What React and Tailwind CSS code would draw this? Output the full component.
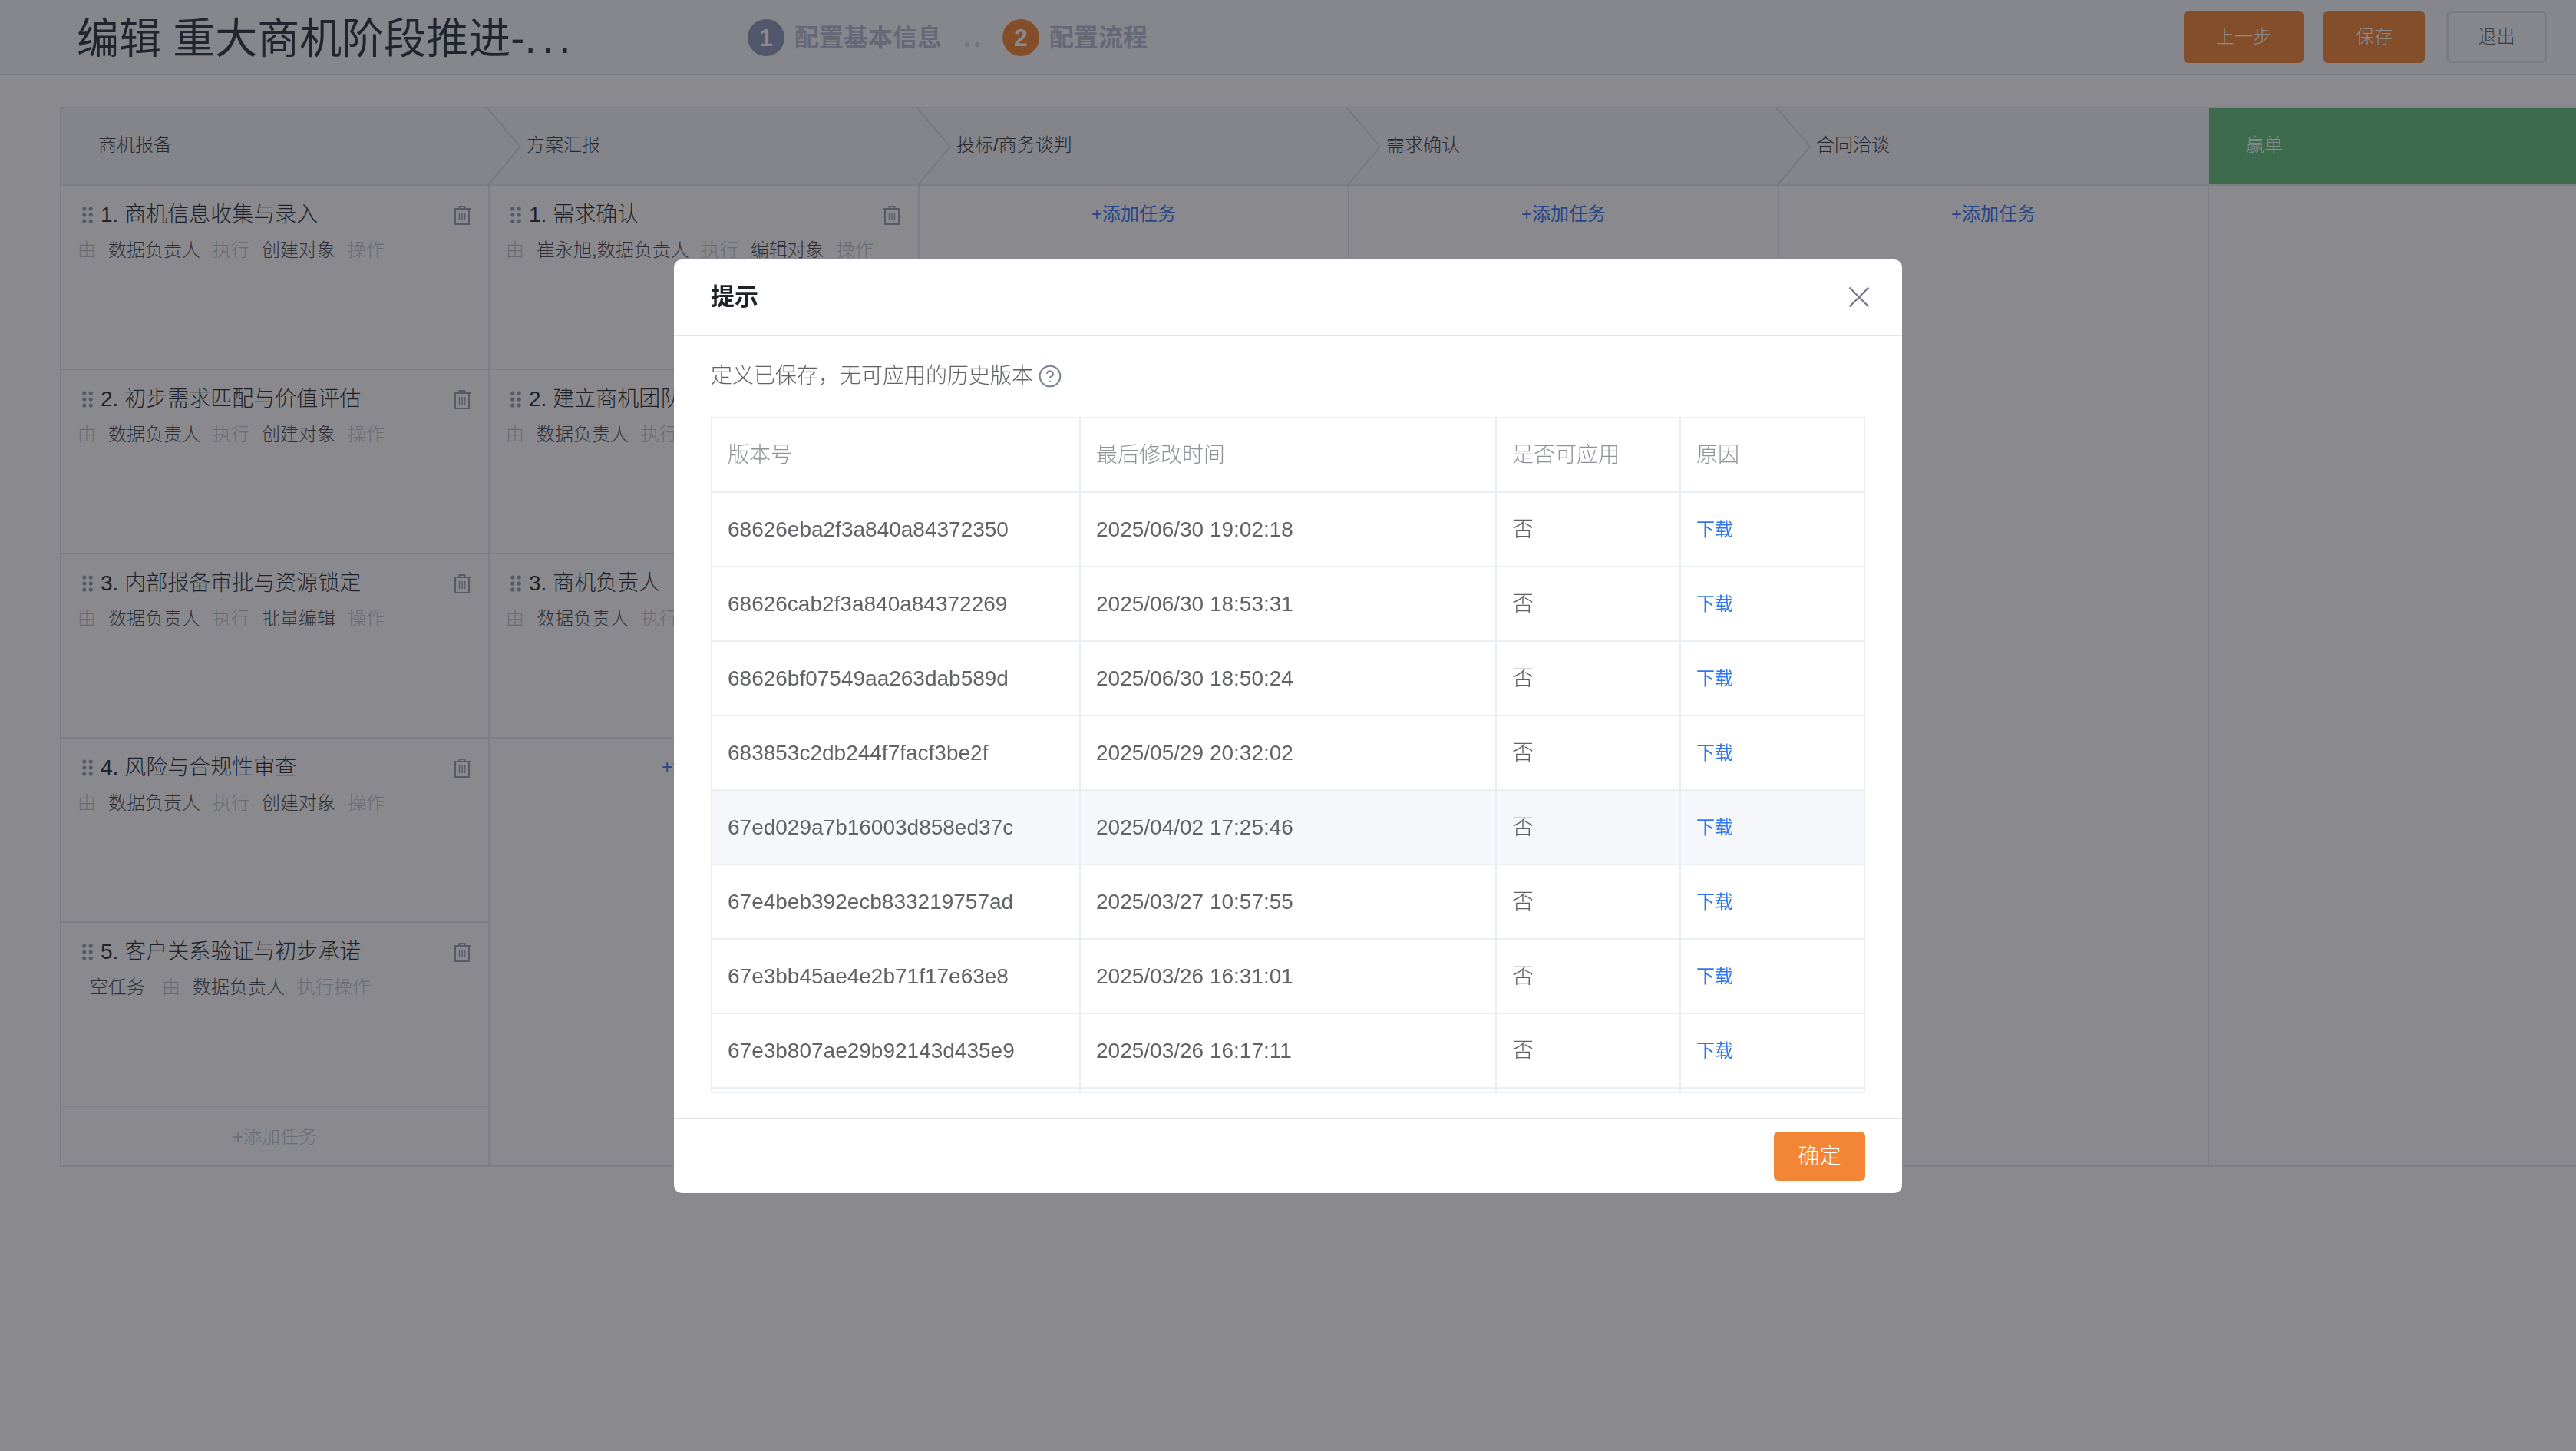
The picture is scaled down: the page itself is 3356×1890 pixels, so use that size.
import React from "react";
import { CircleHelp } from "lucide-react";

const stages = [
  {
    name: "商机报备",
    tasks: [
      { title: "1. 商机信息收集与录入", owner: "数据负责人", action: "创建对象" },
      { title: "2. 初步需求匹配与价值评估", owner: "数据负责人", action: "创建对象" },
      { title: "3. 内部报备审批与资源锁定", owner: "数据负责人", action: "批量编辑" },
      { title: "4. 风险与合规性审查", owner: "数据负责人", action: "创建对象" },
      { title: "5. 客户关系验证与初步承诺", owner: "数据负责人", empty: true },
    ],
    addBelow: true,
  },
  {
    name: "方案汇报",
    tasks: [
      { title: "1. 需求确认", owner: "崔永旭,数据负责人", action: "编辑对象" },
      { title: "2. 建立商机团队", owner: "数据负责人", action: "创建对象" },
      { title: "3. 商机负责人", owner: "数据负责人", action: "创建对象" },
    ],
  },
  { name: "投标/商务谈判", tasks: [] },
  { name: "需求确认", tasks: [] },
  { name: "合同洽谈", tasks: [], last: true },
];

const versions = [
  ["68626eba2f3a840a84372350", "2025/06/30 19:02:18"],
  ["68626cab2f3a840a84372269", "2025/06/30 18:53:31"],
  ["68626bf07549aa263dab589d", "2025/06/30 18:50:24"],
  ["683853c2db244f7facf3be2f", "2025/05/29 20:32:02"],
  ["67ed029a7b16003d858ed37c", "2025/04/02 17:25:46"],
  ["67e4beb392ecb833219757ad", "2025/03/27 10:57:55"],
  ["67e3bb45ae4e2b71f17e63e8", "2025/03/26 16:31:01"],
  ["67e3b807ae29b92143d435e9", "2025/03/26 16:17:11"],
];

const DragDots = () => (
  <svg width="14" height="22" viewBox="0 0 14 22" fill="#98a0b0" className="shrink-0">
    <circle cx="2.8" cy="3" r="2.6" />
    <circle cx="11.2" cy="3" r="2.6" />
    <circle cx="2.8" cy="11" r="2.6" />
    <circle cx="11.2" cy="11" r="2.6" />
    <circle cx="2.8" cy="19" r="2.6" />
    <circle cx="11.2" cy="19" r="2.6" />
  </svg>
);

const Trash = () => (
  <svg width="22" height="25" viewBox="0 0 22 25" fill="none" stroke="#98a0b0" strokeWidth="2" className="shrink-0">
    <path d="M7.5 3.5V1h7v2.5" />
    <path d="M0 4h22" />
    <path d="M2 4v20h18V4" />
    <path d="M7.5 9v10M11 9v10M14.5 9v10" strokeWidth="1.4" />
  </svg>
);

const TaskRow = ({ task }) => (
  <div className="h-[240px] border-b-2 border-[#e6e8ee] pl-[21px] pr-[21px] pt-[18px]">
    <div className="flex items-center h-[40px] pl-[6px] pr-[2px]">
      <DragDots />
      <span className="ml-[10px] text-[28px] text-[#2b2f36] whitespace-nowrap">{task.title}</span>
      <span className="ml-auto">
        <Trash />
      </span>
    </div>
    {task.empty ? (
      <div className="flex items-center h-[32px] mt-[10px] pl-[16px] text-[24px] text-[#4a4d52] whitespace-nowrap">
        <span>空任务</span>
        <span className="ml-[22px] text-[#c0c4cc]">由</span>
        <span className="ml-4">{task.owner}</span>
        <span className="ml-4 text-[#c0c4cc]">执行操作</span>
      </div>
    ) : (
      <div className="flex items-center gap-4 h-[32px] mt-[10px] text-[24px] text-[#4a4d52] whitespace-nowrap">
        <span className="text-[#c0c4cc]">由</span>
        <span>{task.owner}</span>
        <span className="text-[#c0c4cc]">执行</span>
        <span>{task.action}</span>
        <span className="text-[#c0c4cc]">操作</span>
      </div>
    )}
  </div>
);

const StageColumn = ({ stage, first }) => (
  <div className={`w-[560px] shrink-0 border-r-2 border-[#e6e8ee] ${first ? "border-l-2" : ""}`}>
    <div className="relative flex items-center h-[101px] -mr-[2px] bg-[#f2f4f6] border-b-2 border-[#e6e8ee] pl-[48px] pb-[3px] text-[24px] text-[#3a3d42]">
      {stage.name}
      {!stage.last && (
        <svg width="46" height="102" viewBox="0 0 46 102" fill="none" stroke="#d8dae2" strokeWidth="2" className="absolute left-full top-0 -ml-[4px] z-10">
          <path d="M1 0L44 50L1 101" />
        </svg>
      )}
    </div>
    {stage.tasks.map((task) => (
      <TaskRow key={task.title} task={task} />
    ))}
    {stage.addBelow ? (
      <div className="flex items-center justify-center h-[78px] text-[24px] text-[#c0c4cc]">+添加任务</div>
    ) : (
      <div className="flex justify-center h-[72px] pt-[21px] text-[24px] font-normal leading-[32px] text-[#3476f0]">+添加任务</div>
    )}
  </div>
);

const Step = ({ num, label, circle }) => (
  <div className="flex items-center gap-[13px] pt-[1px]">
    <span className={`flex items-center justify-center w-[48px] h-[48px] rounded-full text-white text-[32px] font-bold ${circle}`}>{num}</span>
    <span className="text-[32px] font-bold text-[#b6bbd0] whitespace-nowrap">{label}</span>
  </div>
);

export default function App() {
  return (
    <div className="relative w-[3356px] h-[1890px] overflow-hidden bg-white font-light [font-family:'Liberation_Sans','Noto_Sans_CJK_SC',sans-serif]">
      {/* page header */}
      <header className="flex items-center h-[98px] pl-[100px] pr-[38px] bg-[#f5f9fa] border-b-2 border-[#e2e4ea]">
        <h1 className="w-[874px] pt-[4px] text-[55px] font-normal text-[#2b3440] whitespace-nowrap">
          编辑 重大商机阶段推进-<span className="tracking-[7px]">...</span>
        </h1>
        <Step num="1" label="配置基本信息" circle="bg-[#8e98b8]" />
        <div className="flex justify-center gap-[7px] w-[79px] pt-[20px]">
          <span className="w-[6px] h-[6px] rounded-full bg-[#d0d4dc]" />
          <span className="w-[6px] h-[6px] rounded-full bg-[#d0d4dc]" />
        </div>
        <Step num="2" label="配置流程" circle="bg-[#f28636]" />
        <div className="flex items-center ml-auto text-[24px]">
          <button className="w-[156px] h-[68px] rounded-md bg-[#f28636] text-white">上一步</button>
          <button className="w-[132px] h-[68px] ml-[26px] rounded-md bg-[#f28636] text-white">保存</button>
          <button className="w-[131px] h-[68px] ml-[28px] rounded-md border-[3px] border-[#dcdfe6] bg-[#f7f8fa] text-[#606266]">退出</button>
        </div>
      </header>

      {/* stage board */}
      <main className="flex ml-[78px] mt-[41px] h-[1381px] border-y-2 border-[#e6e8ee] overflow-hidden">
        {stages.map((stage, i) => (
          <StageColumn key={stage.name} stage={stage} first={i === 0} />
        ))}
        <div className="flex-1">
          <div className="flex items-center h-[101px] border-b-2 border-[#e6e8ee] bg-[#62c07c] pl-[48px] pb-[3px] text-[24px] text-white">赢单</div>
        </div>
      </main>

      {/* dialog */}
      <div className="fixed inset-0 z-20 flex items-center justify-center bg-[#15161e]/50">
        <div className="w-[1600px] h-[1216px] mt-[2px] rounded-[10px] bg-white">
          <div className="flex items-center justify-between h-[100px] pl-[48px] pr-[42px] border-b-2 border-[#e2e4ea]">
            <span className="text-[31px] font-bold text-[#1f2329]">提示</span>
            <svg width="28" height="28" viewBox="0 0 28 28" fill="none" stroke="#767c87" strokeWidth="2.4">
              <path d="M1.5 1.5L26.5 26.5M26.5 1.5L1.5 26.5" />
            </svg>
          </div>
          <div className="px-[48px] pt-[32px] pb-[32px]">
            <div className="flex items-center h-[40px] mb-[33px] text-[28px] text-[#606266]">
              定义已保存，无可应用的历史版本
              <CircleHelp size={32} strokeWidth={1.5} className="ml-[6px] text-[#7a8193]" />
            </div>
            <div className="w-[1504px] h-[881px] overflow-hidden border-b-2 border-[#ebeef5]">
              <table className="w-[1502px] table-fixed border-collapse text-[28px] text-left">
                <colgroup>
                  <col className="w-[480px]" />
                  <col className="w-[542px]" />
                  <col className="w-[240px]" />
                  <col className="w-[240px]" />
                </colgroup>
                <thead>
                  <tr className="h-[97px] text-[#909399]">
                    <th className="px-5 font-light border-2 border-[#ebeef5]">版本号</th>
                    <th className="px-5 font-light border-2 border-[#ebeef5]">最后修改时间</th>
                    <th className="px-5 font-light border-2 border-[#ebeef5]">是否可应用</th>
                    <th className="px-5 font-light border-2 border-[#ebeef5]">原因</th>
                  </tr>
                </thead>
                <tbody className="text-[#606266]">
                  {versions.map(([id, time], i) => (
                    <tr key={id} className={`h-[97px] ${i === 4 ? "bg-[#f5f7fa]" : ""}`}>
                      <td className="px-5 border-2 border-[#ebeef5]">{id}</td>
                      <td className="px-5 border-2 border-[#ebeef5]">{time}</td>
                      <td className="px-5 border-2 border-[#ebeef5]">否</td>
                      <td className="px-5 border-2 border-[#ebeef5] text-[24px] font-normal text-[#2f76f2]">下载</td>
                    </tr>
                  ))}
                  <tr className="h-[97px]">
                    <td className="border-2 border-[#ebeef5]" />
                    <td className="border-2 border-[#ebeef5]" />
                    <td className="border-2 border-[#ebeef5]" />
                    <td className="border-2 border-[#ebeef5]" />
                  </tr>
                </tbody>
              </table>
            </div>
          </div>
          <div className="flex justify-end pt-[16px] pr-[48px] border-t-2 border-[#e2e4ea]">
            <button className="w-[119px] h-[64px] pt-[2px] rounded-md bg-[#f28636] text-[28px] text-white">确定</button>
          </div>
        </div>
      </div>
    </div>
  );
}
